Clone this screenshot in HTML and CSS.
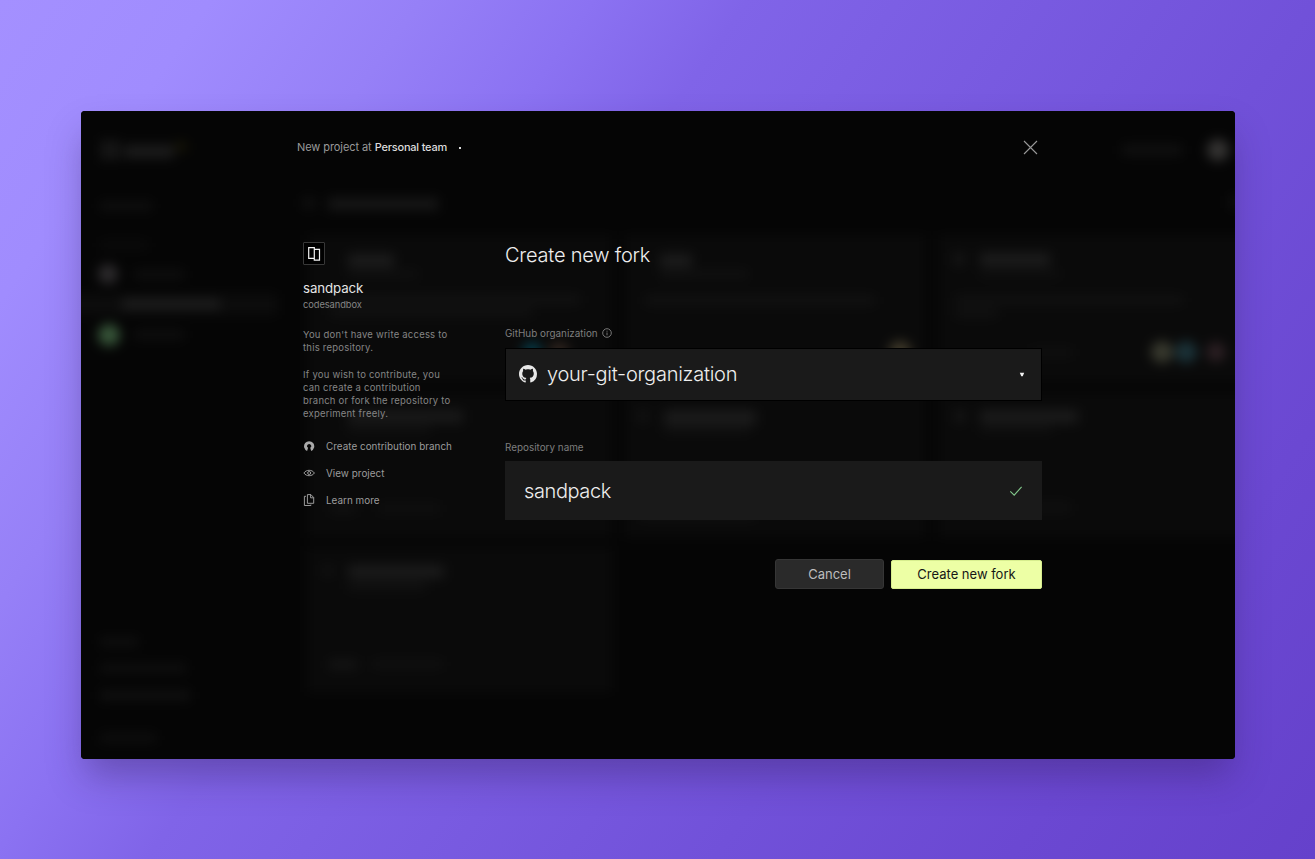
FILE: index.html
```html
<!DOCTYPE html>
<html lang="en">
<head>
<meta charset="utf-8">
<title>Create new fork</title>
<link rel="stylesheet" href="styles.css">
</head>
<body>
<main class="window">
  <svg class="backdrop" width="1154" height="648" viewBox="81 111 1154 648" aria-hidden="true">
    <defs>
      <filter id="soft" filterUnits="userSpaceOnUse" x="41" y="71" width="1234" height="728" color-interpolation-filters="sRGB"><feGaussianBlur stdDeviation="6"/></filter>
    </defs>
    <g filter="url(#soft)">
      <rect x="41" y="71" width="1234" height="728" fill="#050505"/>
      <!-- dashboard cards -->
      <g fill="#0a0a0a">
        <rect x="307" y="235" width="305" height="147"/>
        <rect x="624" y="235" width="302" height="147"/>
        <rect x="938" y="235" width="320" height="147"/>
        <rect x="307" y="392" width="305" height="145"/>
        <rect x="624" y="392" width="302" height="145"/>
        <rect x="938" y="392" width="320" height="145"/>
        <rect x="307" y="547" width="305" height="145"/>
        <rect x="71" y="294" width="206" height="21" fill="#0c0c0c"/>
      </g>
      <!-- dashboard labels -->
      <g fill="#151515">
        <rect x="100" y="140" width="20" height="20"/>
        <rect x="124" y="145" width="50" height="13" fill="#1c1c1c"/>
        <rect x="175" y="142" width="12" height="9" fill="#171506"/>
        <rect x="100" y="202" width="52" height="8" fill="#101010"/>
        <rect x="100" y="241" width="48" height="8" fill="#0b0b0b"/>
        <rect x="134" y="270" width="50" height="9" fill="#0f0f0f"/>
        <rect x="122" y="299" width="98" height="10" fill="#1e1e1e"/>
        <rect x="134" y="330" width="50" height="9" fill="#0f0f0f"/>
        <rect x="302" y="198" width="14" height="10" fill="#101010"/>
        <rect x="328" y="198" width="110" height="12" fill="#171717"/>
        <rect x="1122" y="145" width="60" height="10" fill="#111"/>
        <rect x="1230" y="196" width="10" height="12" fill="#111"/>
        <rect x="348" y="254" width="46" height="13" fill="#1c1c1c"/>
        <rect x="348" y="271" width="70" height="6" fill="#121212"/>
        <rect x="660" y="254" width="32" height="13" fill="#1c1c1c"/>
        <rect x="660" y="271" width="88" height="6" fill="#131313"/>
        <rect x="953" y="253" width="12" height="12"/>
        <rect x="980" y="253" width="70" height="13" fill="#1c1c1c"/>
        <rect x="980" y="271" width="80" height="5" fill="#121212"/>
        <rect x="330" y="295" width="250" height="9" fill="#121212"/>
        <rect x="330" y="308" width="202" height="8" fill="#121212"/>
        <rect x="645" y="296" width="230" height="9" fill="#121212"/>
        <rect x="955" y="296" width="228" height="8" fill="#121212"/>
        <rect x="955" y="309" width="42" height="8" fill="#121212"/>
        <rect x="1030" y="348" width="43" height="9" fill="#0f0f0f"/>
        <rect x="348" y="410" width="115" height="13" fill="#191919"/>
        <rect x="348" y="426" width="82" height="6" fill="#121212"/>
        <rect x="637" y="410" width="12" height="12" fill="#121212"/>
        <rect x="664" y="410" width="92" height="15" fill="#1b1b1b"/>
        <rect x="664" y="427" width="86" height="6" fill="#121212"/>
        <rect x="954" y="410" width="12" height="12"/>
        <rect x="980" y="410" width="98" height="13" fill="#1b1b1b"/>
        <rect x="980" y="426" width="72" height="6" fill="#121212"/>
        <rect x="330" y="504" width="26" height="9" fill="#111"/>
        <rect x="378" y="504" width="62" height="9" fill="#0f0f0f"/>
        <rect x="640" y="508" width="115" height="12" fill="#101010"/>
        <rect x="1035" y="503" width="36" height="9" fill="#101010"/>
        <rect x="322" y="565" width="12" height="11" fill="#111"/>
        <rect x="348" y="565" width="96" height="13" fill="#1b1b1b"/>
        <rect x="348" y="582" width="78" height="8" fill="#121212"/>
        <rect x="329" y="660" width="28" height="9" fill="#151515"/>
        <rect x="372" y="660" width="71" height="8" fill="#101010"/>
        <rect x="100" y="638" width="38" height="8" fill="#101010"/>
        <rect x="100" y="664" width="86" height="8" fill="#101010"/>
        <rect x="100" y="691" width="90" height="9" fill="#111"/>
        <rect x="100" y="734" width="56" height="8" fill="#0f0f0f"/>
      </g>
      <!-- avatars -->
      <circle cx="108" cy="274" r="10" fill="#2d2b2d"/>
      <circle cx="109" cy="335" r="11" fill="#375539"/>
      <circle cx="1218" cy="150" r="11" fill="#343332"/>
      <circle cx="532" cy="352" r="10" fill="#063a47"/>
      <circle cx="559" cy="352" r="10" fill="#30251f"/>
      <circle cx="900" cy="352" r="11" fill="#403a2a"/>
      <circle cx="1162" cy="352" r="11" fill="#38392e"/>
      <circle cx="1186" cy="352" r="11" fill="#1b3238"/>
      <circle cx="1216" cy="352" r="10" fill="#2b1f23"/>
    </g>
  </svg>

  <div class="dialog">
    <header class="header">
      <p class="team">New project at <strong class="team-name">Personal team</strong><span class="dot"></span></p>
      <svg class="close" width="15" height="15" viewBox="0 0 15 15"><path d="M1 1l13 13M14 1L1 14" fill="none" stroke="#999" stroke-width="1.1"/></svg>
    </header>
    <div class="columns">
      <aside class="aside">
        <div class="logo"><svg width="22" height="22" viewBox="0 0 22 22"><path d="M11.3 6.4V4.7H5.7v10.6h5.6M11.3 6.4h5.2v10.7h-5.2z" fill="none" stroke="#f2f2f2" stroke-width="1.2"/></svg></div>
        <h2 class="repo">sandpack</h2>
        <p class="owner">codesandbox</p>
        <p class="note">You don't have write access to<br>this repository.</p>
        <p class="note">If you wish to contribute, you<br>can create a contribution<br>branch or fork the repository to<br>experiment freely.</p>
        <nav class="links">
          <a class="link"><svg width="12" height="14" viewBox="0 0 12 14"><path d="M4.1 11.9A5.1 5.1 0 1 1 8.2 11.9L7.2 8.8a2 2 0 1 0-2.1 0z" fill="#aaa"/></svg>Create contribution branch</a>
          <a class="link"><svg width="12" height="14" viewBox="0 0 12 14"><path d="M.9 7C3.2 3.4 9.1 3.4 11.4 7 9.1 10.6 3.2 10.6.9 7z" fill="none" stroke="#aaa" stroke-width=".9"/><circle cx="6.15" cy="7" r="1.5" fill="none" stroke="#aaa" stroke-width=".9"/></svg>View project</a>
          <a class="link"><svg width="12" height="14" viewBox="0 0 12 14"><path d="M4.4 1.6h3.5l2.8 2.9v5.8H4.4zM7.6 1.6v3.2h3.1M3 3.3H1.4v9.2h6.5v-.9" fill="none" stroke="#aaa" stroke-width=".9" stroke-linejoin="round"/></svg>Learn more</a>
        </nav>
      </aside>
      <section class="form">
        <h1 class="title">Create new fork</h1>
        <div class="label org-label">GitHub organization
          <svg width="10" height="10" viewBox="0 0 10 10"><circle cx="5" cy="5" r="4.3" fill="none" stroke="#858585" stroke-width=".9"/><path d="M5 4.5v2.8M5 2.7v1" stroke="#858585" stroke-width=".9"/></svg>
        </div>
        <div class="field select">
          <svg class="github" width="18" height="18" viewBox="0 0 16 16"><path fill="#e8e8e8" d="M8 0C3.58 0 0 3.58 0 8c0 3.54 2.29 6.53 5.47 7.59.4.07.55-.17.55-.38 0-.19-.01-.82-.01-1.49-2.01.37-2.53-.49-2.69-.94-.09-.23-.48-.94-.82-1.13-.28-.15-.68-.52-.01-.53.63-.01 1.08.58 1.23.82.72 1.21 1.87.87 2.33.66.07-.52.28-.87.51-1.07-1.78-.2-3.64-.89-3.64-3.95 0-.87.31-1.59.82-2.15-.08-.2-.36-1.02.08-2.12 0 0 .67-.21 2.2.82.64-.18 1.32-.27 2-.27s1.36.09 2 .27c1.53-1.04 2.2-.82 2.2-.82.44 1.1.16 1.92.08 2.12.51.56.82 1.27.82 2.15 0 3.07-1.87 3.75-3.65 3.95.29.25.54.73.54 1.48 0 1.07-.01 1.93-.01 2.2 0 .21.15.46.55.38A8.01 8.01 0 0 0 16 8c0-4.42-3.58-8-8-8z"/></svg>
          <span class="org">your-git-organization</span>
          <svg class="caret" width="6" height="5" viewBox="0 0 6 5"><path d="M.8.7h4.4L3.7 4.3H2.3z" fill="#f2f2f2"/></svg>
        </div>
        <div class="label">Repository name</div>
        <div class="field input">
          <span class="name">sandpack</span>
          <svg width="14" height="12" viewBox="0 0 14 12"><path d="M1.3 6.3l3.9 3.9 7.4-8.3" fill="none" stroke="#82c78b" stroke-width="1.1"/></svg>
        </div>
        <div class="actions">
          <button class="button cancel">Cancel</button>
          <button class="button create">Create new fork</button>
        </div>
      </section>
    </div>
  </div>
</main>
</body>
</html>
```
FILE: styles.css
```css
* { box-sizing: border-box; }

body {
  margin: 0;
  width: 1315px;
  height: 859px;
  padding: 111px 80px 100px 81px;
  overflow: hidden;
  font-family: Inter, "Liberation Sans", sans-serif;
  background: linear-gradient(125deg, #a490ff 0%, #a08cfe 11%, #9680f7 22%, #8b72f2 31%, #8064e8 39%, #7151d9 68.6%, #6b48d2 84%, #6541cb 100%);
}

h1, h2, p { margin: 0; font-weight: 400; }

.window {
  position: relative;
  width: 1154px;
  height: 648px;
  border-radius: 4px;
  background: #050505;
  box-shadow: 0 20px 34px -4px rgba(50, 30, 90, 0.38);
}

.backdrop {
  position: absolute;
  top: 0;
  left: 0;
  border-radius: 4px;
}

.dialog {
  position: relative;
  padding: 26px 193px 0 216px;
}

.header {
  display: flex;
  align-items: center;
  justify-content: space-between;
  height: 20px;
  padding-right: 4px;
}

.team {
  display: flex;
  align-items: center;
  font-size: 11px;
  line-height: 20px;
  letter-spacing: -0.08px;
  color: #999;
  white-space: pre;
}

.team-name { font-weight: 500; letter-spacing: -0.2px; color: #dcdcdc; }

.dot { width: 2px; height: 2px; margin: 1px 0 0 12px; background: #ddd; }

.columns {
  display: flex;
  padding: 85px 0 0 6px;
}

.aside { width: 202px; white-space: nowrap; }

.logo {
  display: flex;
  align-items: center;
  justify-content: center;
  width: 22px;
  height: 23px;
  border: 1px solid #383838;
  border-radius: 1px;
  background: #000;
}

.logo svg { flex: none; }

.repo {
  margin-top: 14px;
  font-size: 13.3px;
  line-height: 18px;
  letter-spacing: -0.12px;
  color: #e5e5e5;
}

.owner {
  margin: 1px 0 17px;
  font-size: 9.3px;
  line-height: 13px;
  letter-spacing: -0.06px;
  color: #858585;
}

.note {
  margin-bottom: 14px;
  font-size: 9.5px;
  line-height: 13px;
  letter-spacing: 0.22px;
  color: #858585;
}

.links {
  display: flex;
  flex-direction: column;
  gap: 13px;
  margin-top: 19px;
}

.link {
  display: flex;
  align-items: center;
  gap: 11px;
  height: 14px;
  font-size: 9.9px;
  letter-spacing: 0.02px;
  color: #9c9c9c;
}

.form { width: 537px; }

.title {
  font-size: 20px;
  font-weight: 300;
  line-height: 26px;
  letter-spacing: -0.22px;
  color: #eee;
}

.label {
  display: flex;
  align-items: center;
  gap: 4px;
  height: 14px;
  font-size: 9.9px;
  color: #7e7e7e;
}

.org-label { margin-top: 58px; }

.field {
  display: flex;
  align-items: center;
  background: #1a1a1a;
  color: #eee;
  font-size: 20px;
  font-weight: 300;
}

.select {
  height: 53px;
  margin: 8px 0 39px;
  padding: 0 16px 1px 13px;
  border: 1px solid #000;
}

.org { flex: 1; margin-left: 10px; letter-spacing: -0.25px; }

.input {
  justify-content: space-between;
  height: 59px;
  margin-top: 7px;
  padding: 0 19px 0 19px;
}

.name { letter-spacing: -0.4px; }

.actions {
  display: flex;
  align-items: center;
  justify-content: flex-end;
  gap: 7px;
  margin-top: 39px;
}

.button {
  padding: 0;
  border: 1px solid #363636;
  border-radius: 3px;
  font: 400 13px Inter, sans-serif;
}

.cancel { width: 109px; height: 30px; background: #2a2a2a; color: #bdbdbd; }

.create {
  width: 151px;
  height: 29px;
  border-color: #d7ed8e;
  border-radius: 2px;
  background: #edffa5;
  color: #161616;
}
```
